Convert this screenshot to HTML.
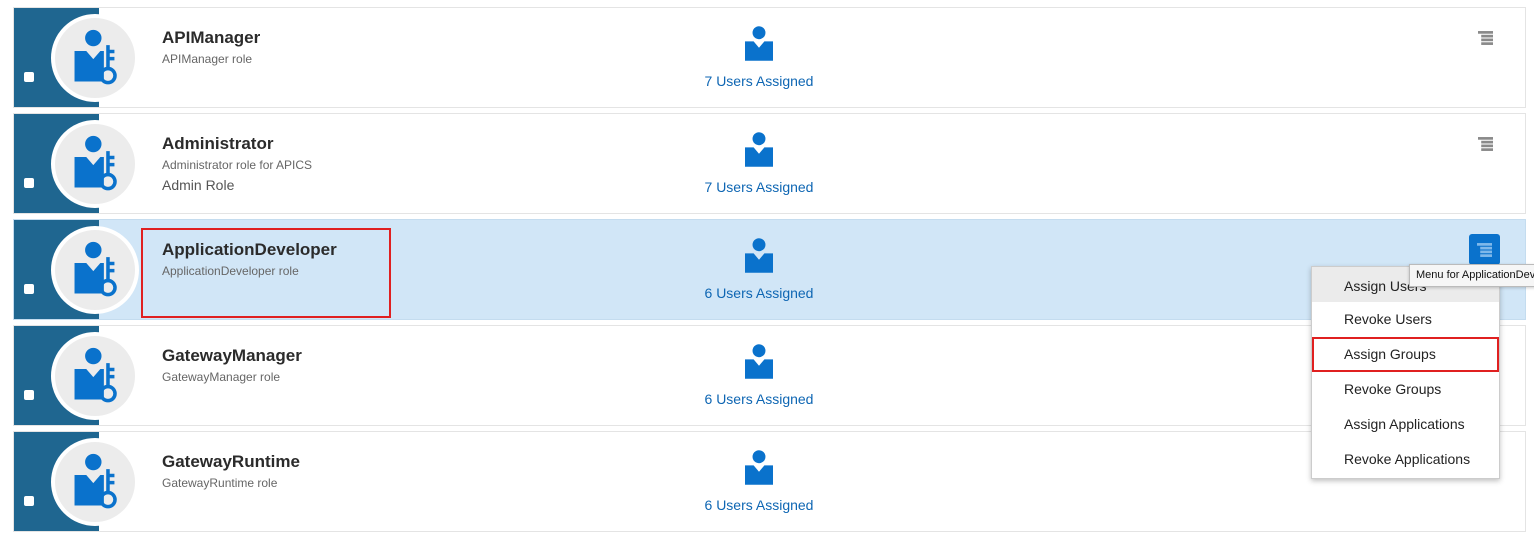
<!DOCTYPE html>
<html><head><style>
body{margin:0;width:1534px;height:534px;background:#fff;font-family:"Liberation Sans",sans-serif;position:relative;overflow:hidden}
.row{position:absolute;left:13px;width:1511px;height:99px;border:1px solid #e4e4e4;background:#fff}
.row.sel{background:#d1e6f7;border-color:#c4dcef}
.stripe{position:absolute;left:0;top:0;width:85px;height:100%;background:#1f6690}
.circ{position:absolute;left:37px;top:6px;width:80px;height:80px;border-radius:50%;background:#ececec;border:4px solid #fff}
.circ svg{position:absolute;left:16px;top:8px}
.cb{position:absolute;left:10px;top:64px;width:10px;height:10px;background:#fff;border-radius:2px}
.t{position:absolute;left:148px;top:20px;font-size:17px;font-weight:bold;color:#2b2b2b}
.s{position:absolute;left:148px;top:44px;font-size:12px;color:#666}
.s2{position:absolute;left:148px;top:63px;font-size:14px;color:#555}
.u{position:absolute;left:690px;top:18px;width:110px;text-align:center}
.u span{display:block;margin-top:7px;font-size:14px;color:#0e66b3}
.m{position:absolute;left:1464px;top:23px}
.mi{height:35px;line-height:35px;padding-left:32px;box-sizing:border-box}
</style></head><body>
<svg width="0" height="0" style="position:absolute"><defs>
<g id="role"><circle cx="19" cy="10" r="7" fill="#0a72cc"/><path d="M3 21h10l6 7 6-7h3v26H3z" fill="#0a72cc"/><path d="M30 16h3v4h4v3h-4v3h4v3h-4v7h-3z" fill="#0a72cc"/><circle cx="31.5" cy="42" r="6" fill="none" stroke="#0a72cc" stroke-width="3"/></g>
<g id="user"><circle cx="13" cy="6" r="6" fill="#0a72cc"/><path d="M0 14h8l5 6 5-6h8v18H0z" fill="#0a72cc"/></g>
<g id="menu"><rect x="0" y="0" width="14" height="2.5" fill="#8a8a8a"/><rect x="3" y="3.5" width="11" height="2.5" fill="#8a8a8a"/><rect x="3" y="7" width="11" height="2.5" fill="#8a8a8a"/><rect x="3" y="10.5" width="11" height="2.5" fill="#8a8a8a"/></g>
</defs></svg>

<div class="row" style="top:7px"><div class="stripe"></div><div class="circ"><svg width="54" height="64" viewBox="0 0 46 54"><use href="#role"/></svg></div><div class="cb"></div>
<div class="t">APIManager</div><div class="s">APIManager role</div>
<div class="u"><svg width="28" height="35" viewBox="0 0 26 32"><use href="#user"/></svg><span>7 Users Assigned</span></div>
<svg class="m" width="15" height="14" viewBox="0 0 14 13"><use href="#menu"/></svg></div>

<div class="row" style="top:113px"><div class="stripe"></div><div class="circ"><svg width="54" height="64" viewBox="0 0 46 54"><use href="#role"/></svg></div><div class="cb"></div>
<div class="t">Administrator</div><div class="s">Administrator role for APICS</div><div class="s2">Admin Role</div>
<div class="u"><svg width="28" height="35" viewBox="0 0 26 32"><use href="#user"/></svg><span>7 Users Assigned</span></div>
<svg class="m" width="15" height="14" viewBox="0 0 14 13"><use href="#menu"/></svg></div>

<div class="row sel" style="top:219px"><div class="stripe"></div><div class="circ"><svg width="54" height="64" viewBox="0 0 46 54"><use href="#role"/></svg></div><div class="cb"></div>
<div style="position:absolute;left:127px;top:8px;width:246px;height:86px;border:2px solid #e02020"></div>
<div class="t">ApplicationDeveloper</div><div class="s">ApplicationDeveloper role</div>
<div class="u"><svg width="28" height="35" viewBox="0 0 26 32"><use href="#user"/></svg><span>6 Users Assigned</span></div>
<div style="position:absolute;left:1455px;top:14px;width:31px;height:31px;background:#0a72cc;border-radius:3px"><svg style="position:absolute;left:8px;top:9px" width="15" height="14" viewBox="0 0 14 13"><rect x="0" y="0" width="14" height="2.5" fill="#7fb8ea"/><rect x="3" y="3.5" width="11" height="2.5" fill="#7fb8ea"/><rect x="3" y="7" width="11" height="2.5" fill="#7fb8ea"/><rect x="3" y="10.5" width="11" height="2.5" fill="#7fb8ea"/></svg></div>
</div>

<div class="row" style="top:325px"><div class="stripe"></div><div class="circ"><svg width="54" height="64" viewBox="0 0 46 54"><use href="#role"/></svg></div><div class="cb"></div>
<div class="t">GatewayManager</div><div class="s">GatewayManager role</div>
<div class="u"><svg width="28" height="35" viewBox="0 0 26 32"><use href="#user"/></svg><span>6 Users Assigned</span></div></div>

<div class="row" style="top:431px"><div class="stripe"></div><div class="circ"><svg width="54" height="64" viewBox="0 0 46 54"><use href="#role"/></svg></div><div class="cb"></div>
<div class="t">GatewayRuntime</div><div class="s">GatewayRuntime role</div>
<div class="u"><svg width="28" height="35" viewBox="0 0 26 32"><use href="#user"/></svg><span>6 Users Assigned</span></div></div>

<div style="position:absolute;left:1311px;top:266px;width:187px;height:211px;background:#fff;border:1px solid #ccc;box-shadow:0 2px 5px rgba(0,0,0,.25);font-size:14px;color:#222">
<div class="mi" style="background:#ebebeb;line-height:38px">Assign Users</div>
<div class="mi">Revoke Users</div>
<div class="mi" style="border:2px solid #e02020;padding-left:30px;line-height:30px">Assign Groups</div>
<div class="mi">Revoke Groups</div>
<div class="mi">Assign Applications</div>
<div class="mi">Revoke Applications</div>
</div>
<div style="position:absolute;left:1409px;top:264px;width:140px;height:21px;background:#f6f6f6;border:1px solid #bbb;font-size:11px;line-height:21px;padding-left:6px;color:#111;white-space:nowrap;overflow:hidden;box-shadow:0 1px 3px rgba(0,0,0,.2)">Menu for ApplicationDeveloper</div>
</body></html>
